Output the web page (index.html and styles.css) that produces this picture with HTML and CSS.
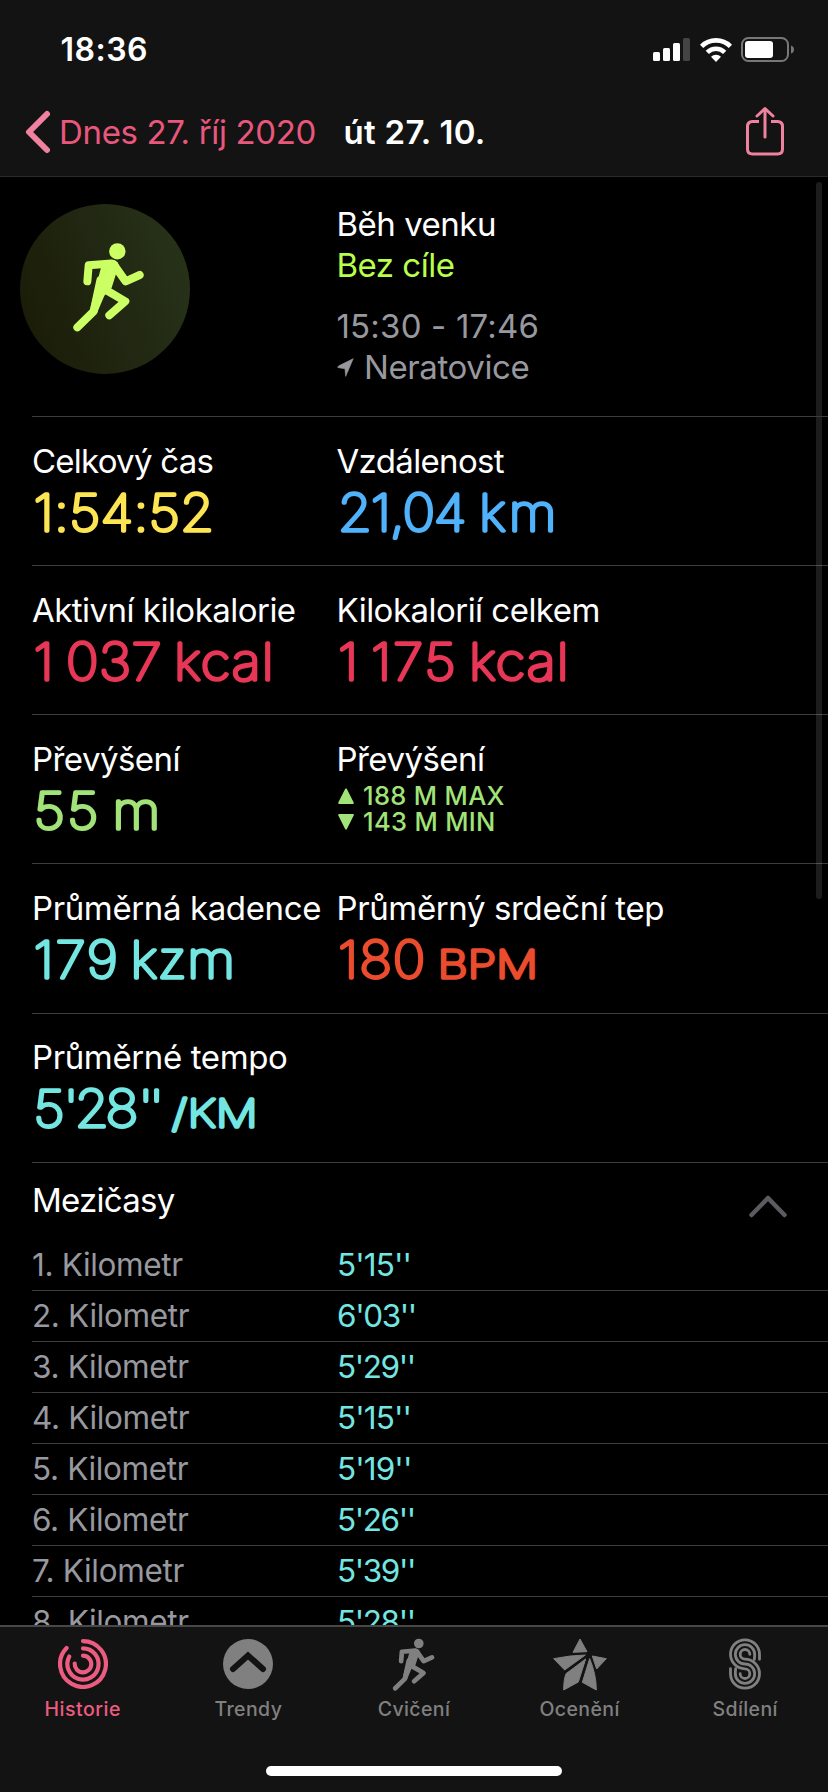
FILE: index.html
```html
<!DOCTYPE html>
<html lang="cs">
<head>
<meta charset="utf-8">
<title>út 27. 10.</title>
<link rel="stylesheet" href="styles.css">
</head>
<body>
<svg class="sprite" aria-hidden="true">
  <symbol id="runner" viewBox="215 185 218 270">
    <circle cx="351" cy="213" r="24.5" fill="currentColor"/>
    <path d="M303 258 L335 238 L352 246 L358 262 L346 284 L334 322 L312 346 L291 396 L269 388 Z" fill="currentColor"/>
    <g fill="none" stroke="currentColor" stroke-width="24" stroke-linecap="round" stroke-linejoin="round">
      <path d="M261 303 L265 255 L333 249.500"/>
      <path d="M340 252 L376 303 L418 284"/>
      <path d="M322 332 L375 363 L327 405"/>
      <path d="M300 300 L280 393 L231 441"/>
    </g>
  </symbol>
</svg>
<div class="app">
  <header class="header">
    <div class="status">
      <span class="clock">18:36</span>
      <div class="status-icons">
        <svg width="38" height="24" viewBox="0 0 38 24" fill="#fff">
          <rect x="0" y="14" width="7" height="9" rx="1.500"/><rect x="10" y="10" width="7" height="13" rx="1.500"/><rect x="20" y="5" width="7" height="18" rx="1.500"/><rect x="30" y="0" width="7" height="23" rx="1.500" fill="#444"/>
        </svg>
        <svg width="32" height="24" viewBox="0 0 32 24">
          <g fill="none" stroke="#fff" stroke-width="4.600"><path d="M1.600 8.300 A20.500 20.500 0 0 1 30.400 8.300"/><path d="M7.300 14.300 A12.300 12.300 0 0 1 24.700 14.300"/></g>
          <path d="M11 18.800 A7 7 0 0 1 21 18.800 L16 24 Z" fill="#fff"/>
        </svg>
        <svg width="54" height="25" viewBox="0 0 54 25">
          <rect x="1" y="1" width="46" height="23" rx="6.500" fill="none" stroke="#777" stroke-width="2"/>
          <rect x="4" y="4" width="28" height="17" rx="3" fill="#fff"/>
          <path d="M50 8.500 Q53 9.500 53 12.500 Q53 15.500 50 16.500 Z" fill="#777"/>
        </svg>
      </div>
    </div>
    <nav class="nav">
      <svg class="back-icon" width="26" height="44" viewBox="0 0 26 44"><path d="M22 4 L4 22 L22 40" fill="none" stroke="#f0829f" stroke-width="6" stroke-linecap="round" stroke-linejoin="round"/></svg>
      <span class="back">Dnes 27. říj 2020</span>
      <h1 class="title">út 27. 10.</h1>
      <svg class="share" width="40" height="50" viewBox="0 0 40 50" fill="none" stroke="#f0829f" stroke-width="3" stroke-linecap="round" stroke-linejoin="round">
        <path d="M14 15.500 H7.500 Q2.500 15.500 2.500 20.500 V43 Q2.500 48 7.500 48 H32.500 Q37.500 48 37.500 43 V20.500 Q37.500 15.500 32.500 15.500 H26" stroke-linecap="butt"/>
        <path d="M20 31 V2.500 M12 10 L20 2.500 L28 10"/>
      </svg>
    </nav>
  </header>

  <main class="content">
    <div class="scrollbar"></div>
    <section class="overview">
      <div class="badge"><svg width="72.700" height="90"><use href="#runner"/></svg></div>
      <div class="info">
        <div>Běh venku</div>
        <div class="goal">Bez cíle</div>
        <div class="when">15:30 - 17:46</div>
        <div class="place"><svg width="17" height="19" viewBox="1013 538 51 58"><path d="M1062 540 L1039 594 L1037 571 L1015 567 Q1015 564 1018 562 Z" fill="currentColor" stroke="currentColor" stroke-width="2" stroke-linejoin="round"/></svg>Neratovice</div>
      </div>
    </section>

    <section class="metrics">
      <div class="metric-row">
        <div class="metric yellow"><div class="label tight">Celkový čas</div><svg class="value"><text x="1.500" y="50" letter-spacing=".23">1:54:52</text></svg></div>
        <div class="metric blue"><div class="label distance">Vzdálenost</div><svg class="value"><text x="0.700" y="50" letter-spacing="-1">21,04</text><text x="131.400" y="50" letter-spacing="2.700">km</text></svg></div>
      </div>
      <div class="metric-row">
        <div class="metric pink"><div class="label wide">Aktivní kilokalorie</div><svg class="value"><text y="50"><tspan x="1.500">1</tspan> <tspan x="31.600" letter-spacing=".4">037</tspan></text><text x="131.500" y="50" letter-spacing="1">kcal</text></svg></div>
        <div class="metric pink"><div class="label wide">Kilokalorií celkem</div><svg class="value"><text y="50"><tspan x="1">1</tspan> <tspan x="31.500" letter-spacing="1.700">175</tspan></text><text x="122.200" y="50" letter-spacing="1">kcal</text></svg></div>
      </div>
      <div class="metric-row">
        <div class="metric green"><div class="label elevation">Převýšení</div><svg class="value"><text x="1.700" y="50" letter-spacing="2.100">55</text><text x="74.500" y="50">m</text></svg></div>
        <div class="metric green"><div class="label elevation">Převýšení</div>
          <div class="ranges">
            <div class="range"><svg width="16" height="16" viewBox="0 0 16 16"><path d="M8 1.500 L14.800 15 H1.200 Z"/></svg>188 M MAX</div>
            <div class="range"><svg width="16" height="16" viewBox="0 0 16 16"><path d="M8 14.500 L14.800 1 H1.200 Z"/></svg>143 M MIN</div>
          </div>
        </div>
      </div>
      <div class="metric-row">
        <div class="metric cyan"><div class="label">Průměrná kadence</div><svg class="value"><text x="1.500" y="50" letter-spacing="1.500">179</text><text x="91.200" y="50" letter-spacing=".5">kzm</text></svg></div>
        <div class="metric red"><div class="label">Průměrný srdeční tep</div><svg class="value"><text x="1" y="50" letter-spacing=".8">180</text><text class="unit" x="82.500" y="50" letter-spacing=".3">BPM</text></svg></div>
      </div>
      <div class="metric-row">
        <div class="metric cyan"><div class="label">Průměrné tempo</div><svg class="value"><text x="1.500 29.200 39.600 68.100 98.400 108.300" y="50">5'28''</text><text class="unit" x="114.800" y="50" letter-spacing=".5">/KM</text></svg></div>
      </div>
    </section>

    <section class="splits">
      <div class="splits-head"><span class="tight">Mezičasy</span><svg width="40" height="26" viewBox="0 0 40 26"><path d="M3.500 22 L20 5 L36.500 22" fill="none" stroke="#5c5c60" stroke-width="4.500" stroke-linecap="round" stroke-linejoin="round"/></svg></div>
      <div class="split"><span>1. Kilometr</span><span class="pace one">5'15''</span></div>
      <div class="split"><span>2. Kilometr</span><span class="pace">6'03''</span></div>
      <div class="split"><span>3. Kilometr</span><span class="pace">5'29''</span></div>
      <div class="split"><span>4. Kilometr</span><span class="pace one">5'15''</span></div>
      <div class="split"><span>5. Kilometr</span><span class="pace one">5'19''</span></div>
      <div class="split"><span>6. Kilometr</span><span class="pace">5'26''</span></div>
      <div class="split"><span>7. Kilometr</span><span class="pace">5'39''</span></div>
      <div class="split"><span>8. Kilometr</span><span class="pace">5'28''</span></div>
    </section>
  </main>

  <footer class="tabbar">
    <div class="tabs">
      <div class="tab active">
        <div class="tab-icon"><svg width="50" height="50" viewBox="0 0 50 50" fill="none" stroke="currentColor" stroke-width="4.200" stroke-linecap="round"><path d="M25 2.100 A22.900 22.900 0 1 1 8.600 9"/><path d="M25 9.400 A15.600 15.600 0 1 1 11.300 17.500"/><path d="M25 16.700 A8.300 8.300 0 1 1 16.700 24.500"/></svg></div>
        <span>Historie</span>
      </div>
      <div class="tab">
        <div class="tab-icon"><svg width="50" height="50" viewBox="0 0 50 50"><circle cx="25" cy="25" r="25" fill="currentColor"/><path d="M10 30 L25 16.500 L40 30" fill="none" stroke="#131313" stroke-width="6" stroke-linecap="round"/></svg></div>
        <span>Trendy</span>
      </div>
      <div class="tab">
        <div class="tab-icon"><svg width="43" height="53"><use href="#runner"/></svg></div>
        <span>Cvičení</span>
      </div>
      <div class="tab">
        <div class="tab-icon"><svg width="54" height="53" viewBox="414 115 162 159" fill="currentColor" stroke="currentColor" stroke-width="3" stroke-linejoin="round"><path d="M495 118 L516 156 L474 158 Z"/><path d="M416 177 Q465 167 511 166 L449 211 Z"/><path d="M512 178 L490 247 L446 271 Q446 240 453 222 Z"/><path d="M524 177 Q544 225 544 271 L502 248 Z"/><path d="M532 169 L574 177 L545 208 Z"/></svg></div>
        <span>Ocenění</span>
      </div>
      <div class="tab">
        <div class="tab-icon"><svg width="32" height="52" viewBox="942 114 96 156" fill="none" stroke="currentColor" stroke-width="8.500" stroke-linecap="round"><path d="M1033.500 178 V163 A43.500 43.500 0 1 0 990 206.500 A14.500 14.500 0 1 1 975.500 221"/><path d="M1018 178 Q1019 171 1019 163 A29 29 0 1 0 990 192 A29 29 0 1 1 961 221 Q961 213 962 206"/><path d="M1004.500 163 A14.500 14.500 0 1 0 990 177.500 A43.500 43.500 0 1 1 946.500 221 V206"/></svg></div>
        <span>Sdílení</span>
      </div>
    </div>
    <div class="home"></div>
  </footer>
</div>
</body>
</html>
```
FILE: styles.css
```css
* { box-sizing: border-box; }
body { margin: 0; background: #000; color: #fff; font-family: Inter, "Liberation Sans", sans-serif; }
svg { display: block; flex: none; }
.sprite { position: absolute; width: 0; height: 0; }

.app { display: flex; flex-direction: column; width: 828px; height: 1792px; overflow: hidden; }

.header { height: 177px; background: #131313; border-bottom: 1px solid #2a2a2a; }
.status { display: flex; align-items: center; justify-content: space-between; height: 88px; padding: 11px 33px 0 60.5px; }
.clock { font-size: 32px; font-weight: 600; letter-spacing: .48px; }
.status-icons { display: flex; align-items: center; gap: 9px; }
.nav { display: flex; align-items: center; height: 88px; padding: 0 43px 0 25px; font-size: 33px; }
.back { margin-left: 8px; color: #ea577d; letter-spacing: -.34px; }
.title { margin: 0 auto 0 27.500px; font-size: 33px; font-weight: 600; letter-spacing: .3px; }
.share { margin-bottom: 3px; }

.content { position: relative; flex: 1; min-height: 0; overflow: hidden; font-size: 33px; letter-spacing: -.5px; }
.scrollbar { position: absolute; top: 5px; right: 6px; width: 6px; height: 717px; border-radius: 3px; background: rgba(255, 255, 255, .11); }

.overview { display: grid; grid-template-columns: 316.500px 1fr; height: 240px; padding: 27px 0 0 20px; position: relative; }
.overview::after { content: ""; position: absolute; left: 32px; right: 0; bottom: 0; height: 1px; background: #3d3d3f; }
.badge { display: flex; width: 170px; height: 170px; padding: 38px 0 0 51.700px; border-radius: 50%; background: linear-gradient(70deg, #191a05, #212712 50%, #29341a); color: #cbff63; }
.info { line-height: 41px; }
.goal { color: #b7ff4b; }
.when { margin-top: 20px; color: #98989f; letter-spacing: .19px; }
.place { display: flex; align-items: center; gap: 10.500px; color: #98989f; letter-spacing: -.4px; }

.metric-row { display: grid; grid-template-columns: 304.500px 1fr; height: 149px; margin-left: 32px; padding-top: 23.500px; border-bottom: 1px solid #3d3d3f; }
.metric-row:nth-child(4) { height: 150px; }
.metric-row:nth-child(5) { padding-top: 22.500px; }
.label { height: 40px; line-height: 40px; white-space: nowrap; letter-spacing: -.38px; }
.wide { letter-spacing: -.52px; }
.elevation { letter-spacing: -.55px; }
.distance { letter-spacing: -.65px; }
.tight { letter-spacing: -.75px; }
.value { width: 300px; height: 60px; overflow: visible; fill: currentColor; stroke: currentColor; stroke-width: 3.600px; stroke-linejoin: round; font-size: 51px; font-weight: 100; letter-spacing: 0; }
.value text { transform: scaleX(1.08); }
.value .unit { font-size: 38px; transform: scaleX(1.22); }
.yellow { color: #fce452; }
.blue { color: #4fb2fb; }
.pink { color: #e83756; }
.green { color: #a1e378; }
.cyan { color: #74e6e2; }
.red { color: #eb4c2d; }
.metric .label { color: #fff; }
.ranges { margin: 4px 0 0 1px; }
.range { display: flex; align-items: center; gap: 9.500px; height: 26px; font-size: 25.500px; font-weight: 500; letter-spacing: .33px; }
.range svg { fill: currentColor; stroke: currentColor; stroke-width: 2px; stroke-linejoin: round; }

.splits-head { display: flex; align-items: center; justify-content: space-between; height: 77px; padding: 0 40px 3px 32px; }
.splits-head svg { margin-top: 12px; }
.split { display: grid; grid-template-columns: 305px 1fr; height: 51px; margin-left: 32px; line-height: 50px; border-bottom: 1px solid #3d3d3f; color: #98989f; font-size: 31.500px; letter-spacing: -.35px; }
.pace { color: #74e6e2; letter-spacing: -1.400px; }
.one { letter-spacing: -.9px; }

.tabbar { height: 167px; background: #131313; border-top: 2px solid #484848; }
.tabs { display: grid; grid-template-columns: repeat(5, 1fr); height: 139px; padding-top: 9px; color: #808080; font-size: 19.500px; font-weight: 500; letter-spacing: .4px; }
.tab { text-align: center; line-height: 24px; }
.active { color: #ec5b80; letter-spacing: .52px; }
.tab-icon { display: flex; align-items: center; justify-content: center; height: 56px; margin-bottom: 5px; }
.home { width: 296px; height: 10px; margin: 0 auto; border-radius: 5px; background: #fff; }
```
